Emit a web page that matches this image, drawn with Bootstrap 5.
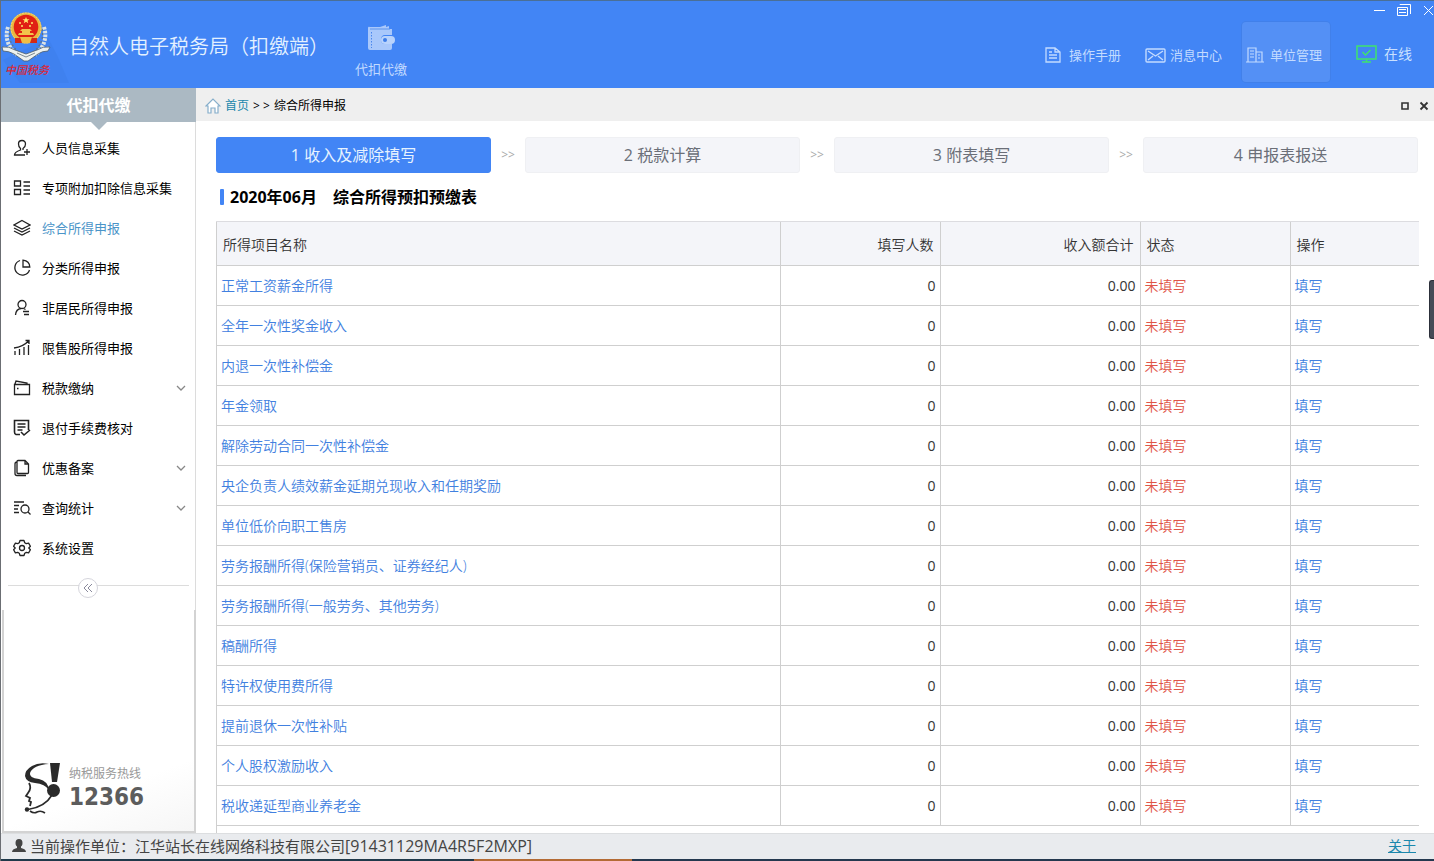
<!DOCTYPE html>
<html lang="zh-CN">
<head>
<meta charset="utf-8">
<meta name="viewport" content="width=device-width, initial-scale=1">
<title>自然人电子税务局（扣缴端）</title>
<link rel="stylesheet" href="https://cdn.jsdelivr.net/npm/bootstrap@5.3.0/dist/css/bootstrap.min.css">
<style>
  body { font-family: "Open Sans", "Noto Sans CJK SC", sans-serif; font-size: 13px; line-height: 20px; color: #000; background: #fff; }
  a { text-decoration: none; color: #4180e0; }
  svg { display: block; flex: none; }
  .window { border-left: 1px solid #6b6e73; border-top: 1px solid #4a6f96; }
  .plain { border: 0; background: none; padding: 0; }

  .app-header { height: 87px; background: #4285f5; color: #cfe1ff; }
  .emblem-box { width: 68px; }
  .app-title { font-size: 20px; line-height: 28px; font-weight: 350; color: #e4f1ff; margin-top: 4px; }
  .module-btn { padding: 24px 0 0; margin-left: 16px; width: 72px; color: #c3dbff; font-size: 13px; line-height: 20px; }
  .module-btn svg { margin: 0 auto 8px; }
  .tool-btn { height: 60px; padding: 6px 4px 0; color: #c3dbff; font-size: 13px; border: 0; border-radius: 4px; }
  .tool-btn.current { background: #5490f5; box-shadow: 0 0 0 1px #4180ea; width: 88px; gap: 6px; margin-right: 26px; }
  .tools { padding: 21px 22px 0 0; }
  .tool-btn.online { font-size: 14px; padding: 4px 0 0; color: #c9e0ff; gap: 7px; }
  .win-ctl { top: 2px; right: 0; gap: 12px; }
  .win-ctl button, .tab-ctl button { border: 0; background: none; padding: 0; }

  .sidebar { width: 195px; }
  .side-title { height: 34px; background: #abb9c3; color: #fff; font-size: 16px; font-weight: 700; line-height: 34px; }
  .side-title::after { content: ""; position: absolute; left: 50%; top: 100%; margin-left: -8px; border: 8px solid transparent; border-top-color: #abb9c3; border-bottom: 0; }
  .side-menu { padding-top: 6px; }
  .side-menu, .fold { border-right: 1px solid #dcdcdc; }
  .side-menu a { height: 40px; padding: 0 9px 0 12px; gap: 11px; color: #000; }
  .side-menu a.active { color: #4a94c8; }
  .side-menu svg { stroke: #222; fill: none; stroke-width: 1.3; }
  .side-menu .chev { stroke: #888; margin-left: auto; }
  .fold { height: 42px; padding: 11px 6px 0 7px; }
  .fold-line { border-top: 1px solid #dcdcdc; margin-top: 6px; }
  .fold button { left: 70px; top: -8px; width: 20px; height: 20px; border: 1px solid #d5d5dc; border-radius: 50%; background: #fff; }
  .hotline { border: 2px solid #d3d3d3; border-top: 0; margin-left: 1px; padding: 0 0 16px 20px; background: linear-gradient(160deg, #fff 75%, #f6f6f6); }
  .hot-label { font-size: 12px; line-height: 18px; color: #999; }
  .hot-num { font-size: 24px; line-height: 28px; font-weight: 700; color: #5c5c5c; font-family: "DejaVu Sans Condensed", "Open Sans", sans-serif; margin-bottom: 4px; }

  .crumbs { height: 33px; background: #efefef; font-size: 12px; padding: 2px 5px 0 9px; }
  .crumbs a { color: #1b87ac; }
  .crumbs .sep { width: 25px; }
  .work { padding: 16px 15px 0 20px; }
  .steps { padding-right: 1px; }
  .step { height: 36px; font-size: 16px; border: 1px solid #eff0f3; background: #f4f5f9; color: #6b6f78; border-radius: 3px; padding: 0; flex: 1 1 0; }
  .step.active { background: #4285f5; border-color: #4285f5; color: #e6f3ff; }
  .step-sep { width: 34px; color: #aaa; font-size: 12px; }
  .sheet-title { font-size: 16px; line-height: 24px; font-weight: 700; margin: 12px 0 12px 4px; gap: 6px; }
  .sheet-title::before { content: ""; width: 4px; height: 16px; background: #4285f5; border-radius: 1px; }
  .sheet-title .sheet-name { margin-left: 10px; }

  .income { table-layout: fixed; width: 100%; font-size: 14px; border-collapse: collapse; color: #333; }
  .income th, .income td { border: 1px solid #cfcfcf; border-right: 0; padding: 0 4px; height: 40px; }
  .income th { background: #f4f5f9; font-weight: 350; height: 44px; padding: 2px 6px 0; border-top-color: #dcdce0; }
  .income a, .income .todo { font-weight: 350; }
  .income .w-people { width: 160px; }
  .income .w-sum { width: 200px; }
  .income .w-state { width: 150px; }
  .income .w-op { width: 129px; }
  .todo { color: #df5548; }
  .tail { border-left: 1px solid #cfcfcf; }
  .drawer { right: 0; top: 279px; width: 5px; height: 59px; background: #454b57; border: 1px solid #2c303a; border-right: 0; border-radius: 3px 0 0 3px; }

  .status { height: 28px; background: linear-gradient(90deg, #20394a 0 33%, #b46b35 33% 44%, #24384f 44%) bottom / 100% 2px no-repeat #e9ebee; border-top: 1px solid #dcdee0; font-size: 15px; color: #444; padding: 0 18px 4px 11px; }
  .status .code { font-size: 16px; }
  .status a { font-size: 14px; color: #1b87ac; text-decoration: underline; }
</style>
</head>
<body>
<div class="window vh-100 d-flex flex-column overflow-hidden position-relative">
  <header class="app-header d-flex position-relative">
    <div class="emblem-box">
      <svg width="68" height="87" viewBox="1 1 68 87" role="img" aria-label="中国税务">
        <path d="M48 38L57 55 69 83H20L3 60z" fill="#3f81ef"/>
        <g fill="none" stroke="#dce3e4" stroke-width="4" stroke-dasharray="2.6 1.2">
          <path d="M8 27Q3 43 17 55M44 27Q49 43 35 55"/>
        </g>
        <g fill="none" stroke="#66757c" stroke-width="1.2" stroke-dasharray="2 2">
          <path d="M10 29Q7 43 20 53M42 29Q45 43 32 53"/>
        </g>
        <path d="M2 47Q9 46 15 50L26 54 37 50Q43 46 50 47L48 51Q42 51 38 54L28 61H24L14 54Q9 51 3 51z" fill="#edf1ef" stroke="#4c5d6b" stroke-width=".8"/>
        <path d="M17 53L26 57 35 53" fill="none" stroke="#7c8990"/>
        <circle cx="26" cy="28" r="15.5" fill="#e9b840"/>
        <circle cx="26" cy="28" r="15" fill="none" stroke="#f5d878" stroke-dasharray="2 1"/>
        <circle cx="26" cy="27" r="12.3" fill="#e02014"/>
        <path d="M26 17l1 2.3h2.5l-2 1.5.8 2.4-2.3-1.5-2.3 1.5.8-2.4-2-1.5H25z" fill="#ffe56a"/>
        <g fill="#ffe56a"><circle cx="20" cy="23" r="1"/><circle cx="22" cy="26" r="1"/><circle cx="30" cy="26" r="1"/><circle cx="32" cy="23" r="1"/></g>
        <path d="M18 35h16l-1-2h-3v-2h2l-2-2h-8l-2 2h2v2h-3z" fill="#f1c44c"/>
        <path d="M15 38h22v5H15z" fill="#d52a17"/><path d="M20 37h12l-2 6h-8z" fill="#f0bd45"/>
        <text x="5" y="74" font-size="11" font-style="italic" font-weight="500" fill="#d8283a">中国税务</text>
      </svg>
    </div>
    <div class="app-title align-self-center">自然人电子税务局（扣缴端）</div>
    <button type="button" class="plain module-btn text-center align-self-start">
      <svg width="28" height="26" viewBox="0 0 28 26"><path d="M1 3Q1 1 3 2l10 0 6-2v2l3-1v3h3v6h-7q-4 0-4 4.500t4 4.500h7v4q0 2-2 2H3q-2 0-2-2z" fill="#a9c8fb"/><path d="M3 4h20" stroke="#5b93ee"/><path d="M4.500 7v16" stroke="#4a87ec" stroke-dasharray="1.500 1.500"/><rect x="14" y="11" width="14" height="8" rx="4" fill="#b9d3fc"/><circle cx="18" cy="15" r="2" fill="#3d7de8"/></svg>
      代扣代缴
    </button>
    <nav class="tools d-flex ms-auto align-items-start" aria-label="工具">
      <button type="button" class="plain tool-btn d-flex align-items-center me-3 gap-2">
        <svg width="16" height="16" viewBox="0 0 16 16" fill="none" stroke="#c3dbff" stroke-width="1.300"><path d="M1 1h9l5 4v10H1zM10 1v4h5M4 5h3M4 8h8M4 11h8"/></svg>操作手册</button>
      <button type="button" class="plain tool-btn d-flex align-items-center me-3 gap-1">
        <svg width="21" height="15" viewBox="0 0 21 15" fill="none" stroke="#c3dbff" stroke-width="1.400"><rect x="1" y="1" width="19" height="13" rx="1"/><path d="M3 3l7.500 5L18 3M3 12l5-4M18 12l-5-4"/></svg>消息中心</button>
      <button type="button" class="tool-btn current d-flex align-items-center">
        <svg width="18" height="16" viewBox="0 0 18 16" fill="none" stroke="#c3dbff" stroke-width="1.200"><path d="M0 15h18M2 15V1h8v14M10 5h6v10M4 4h4M4 7h4M4 10h4M12 8h2M12 11h2"/></svg>单位管理</button>
      <div class="tool-btn online d-flex align-items-center">
        <svg width="21" height="18" viewBox="0 0 21 18" fill="none" stroke="#3fe36c" stroke-width="1.500"><path d="M1 1h19v13H1zM6 17h9M10.500 14v3M6.500 7l3 3 5-5"/></svg>在线</div>
    </nav>
    <div class="win-ctl position-absolute d-flex align-items-center">
      <button type="button" aria-label="最小化"><svg width="11" height="14" viewBox="0 0 11 14"><path d="M0 7.500h11" stroke="#fff"/></svg></button>
      <button type="button" aria-label="还原"><svg width="14" height="14" viewBox="0 0 14 14" fill="none" stroke="#fff"><path d="M.5 4.500h10v8H.5zM3 2V1.500h10.500V11M2 6.500h7M2 9.500h7" /></svg></button>
      <button type="button" aria-label="关闭"><svg width="11" height="14" viewBox="0 0 11 14"><path d="M1 3l9 9M10 3l-9 9" stroke="#fff"/></svg></button>
    </div>
  </header>

  <div class="d-flex flex-fill overflow-hidden">
    <aside class="sidebar d-flex flex-column flex-shrink-0">
      <div class="side-title text-center position-relative">代扣代缴</div>
      <nav class="side-menu nav flex-column">
        <a href="#" class="d-flex align-items-center"><svg width="18" height="18" viewBox="0 0 18 18"><path d="M10 11V9.500Q12.500 8 12.500 5 12.500 1.500 9 1.500T5.500 5Q5.500 8 7.500 9.500V11Q1.500 13 1.500 16H12M14 10v6M11 13h6"/></svg>人员信息采集</a>
        <a href="#" class="d-flex align-items-center"><svg width="18" height="18" viewBox="0 0 18 18"><path d="M1.500 2h6v5h-6zM1.500 10.500h6v5h-6zM10.500 3H17M10.500 7H17M10.500 11H17M10.500 15H17"/></svg>专项附加扣除信息采集</a>
        <a href="#" class="d-flex align-items-center active"><svg width="18" height="18" viewBox="0 0 18 18"><path d="M9 1.500L17 6 9 10 1 6zM1 9l8 4 8-4M1 12l8 4 8-4"/></svg>综合所得申报</a>
        <a href="#" class="d-flex align-items-center"><svg width="18" height="18" viewBox="0 0 18 18"><path d="M7 1.500A7.500 7.500 0 1 0 16.500 11M10 1.200V8h6.800Q16.500 2 10 1.200z"/></svg>分类所得申报</a>
        <a href="#" class="d-flex align-items-center"><svg width="18" height="18" viewBox="0 0 18 18"><circle cx="9" cy="5.500" r="4"/><path d="M2.500 16Q3 10 8 9.500M10.500 9.500l2 1M10 12.500h6M11 15.500h5"/></svg>非居民所得申报</a>
        <a href="#" class="d-flex align-items-center"><svg width="18" height="18" viewBox="0 0 18 18"><path d="M2 12v4M6.500 10v6M11 8v8M15.500 6v10M1 9Q10 8 16 1.500M12.500 1.500H16V5"/></svg>限售股所得申报</a>
        <a href="#" class="d-flex align-items-center"><svg width="18" height="18" viewBox="0 0 18 18"><path d="M1.500 5.500h15v10h-15zM2 5l1-3 11 2v1M4 9.500h1.500"/></svg>税款缴纳<svg class="chev" width="10" height="8" viewBox="0 0 10 8"><path d="M1 2l4 4 4-4"/></svg></a>
        <a href="#" class="d-flex align-items-center"><svg width="18" height="18" viewBox="0 0 18 18"><path stroke-width="1.600" d="M7 15.500H3Q1.500 15 1.500 13V1.500h14V11M4.500 5h8M4.500 8h8M4.500 11h5M8 13l3 3 6-5"/></svg>退付手续费核对</a>
        <a href="#" class="d-flex align-items-center"><svg width="18" height="18" viewBox="0 0 18 18"><path d="M5 1.500h7L15.500 5v8.500q0 1-1 1H5q-1 0-1-1v-11q0-1 1-1zM12 1.500V5h3.500M4 3Q2 3 2 5v9.500q0 2 2 2h9"/></svg>优惠备案<svg class="chev" width="10" height="8" viewBox="0 0 10 8"><path d="M1 2l4 4 4-4"/></svg></a>
        <a href="#" class="d-flex align-items-center"><svg width="18" height="18" viewBox="0 0 18 18"><path d="M1 3h10M1 6.500h5M1 10h4M1 13.500h5"/><circle cx="12" cy="10" r="4"/><path d="M15 13l2.500 2.500"/></svg>查询统计<svg class="chev" width="10" height="8" viewBox="0 0 10 8"><path d="M1 2l4 4 4-4"/></svg></a>
        <a href="#" class="d-flex align-items-center"><svg width="18" height="18" viewBox="0 0 18 18"><circle cx="9" cy="9" r="2.500"/><path stroke-linejoin="round" d="M7 1.500h4l.7 2.200 1.600.9 2.300-.5 1.800 3.200L15.800 9l1.600 1.700-1.800 3.200-2.300-.5-1.600.9-.7 2.200H7l-.7-2.200-1.600-.9-2.300.5L.6 10.700 2.200 9 .6 7.300l1.800-3.200 2.300.5 1.600-.9z"/></svg>系统设置</a>
      </nav>
      <div class="fold">
        <div class="fold-line position-relative">
          <button type="button" class="position-absolute d-flex align-items-center justify-content-center p-0" aria-label="收起菜单"><svg width="10" height="8" viewBox="0 0 10 8" fill="none" stroke="#8a8a9c"><path d="M5 0L1 4l4 4M9 0L5 4l4 4"/></svg></button>
        </div>
      </div>
      <div class="hotline flex-fill d-flex align-items-end">
        <svg width="45" height="54" viewBox="23 761 45 54" fill="#2a2a2a"><path d="M48 764Q38 762 31 766 24 770 24 776 25 782 34 783 44 784 48 790 47 781 38 779 28 778 29 773 32 765 48 764z"/><path d="M49 763h10l-3 19h-5z"/><circle cx="52.500" cy="790.500" r="6.500"/><path d="M28 783q3 5-1 10l-2 3 4 2-1 3 2 1-1 4" fill="none" stroke="#2a2a2a" stroke-width="1.800"/><path d="M51 795Q44 807 27 809.500" fill="none" stroke="#2a2a2a" stroke-width="1.600"/><path d="M29 811q4 3 7 1 4-2 8 1" fill="none" stroke="#2a2a2a" stroke-width="1.600"/><circle cx="26" cy="809.500" r="2.200"/></svg>
        <div><div class="hot-label">纳税服务热线</div><div class="hot-num">12366</div></div>
      </div>
    </aside>

    <main class="flex-fill d-flex flex-column overflow-hidden">
      <div class="crumbs d-flex align-items-center">
        <svg class="me-1" width="16" height="16" viewBox="0 0 16 16" fill="#fff" stroke="#86aecb" stroke-width="1.200"><path d="M1 8l7-7 7 7h-2v7H10v-5H6v5H3V8z"/></svg>
        <a href="#">首页</a><span class="sep text-center">&gt; &gt;</span><span>综合所得申报</span>
        <div class="tab-ctl ms-auto d-flex gap-2">
          <button type="button" aria-label="最大化"><svg width="12" height="10" viewBox="0 0 12 10"><path d="M3 2h6v6H3z" fill="none" stroke="#333" stroke-width="1.600"/></svg></button>
          <button type="button" aria-label="关闭标签"><svg width="10" height="10" viewBox="0 0 10 10"><path d="M1.500 1.500l7 7M8.500 1.500l-7 7" stroke="#333" stroke-width="1.800"/></svg></button>
        </div>
      </div>
      <div class="work flex-fill d-flex flex-column">
        <div class="steps d-flex align-items-center">
          <button type="button" class="step active">1 收入及减除填写</button><span class="step-sep text-center">&gt;&gt;</span>
          <button type="button" class="step">2 税款计算</button><span class="step-sep text-center">&gt;&gt;</span>
          <button type="button" class="step">3 附表填写</button><span class="step-sep text-center">&gt;&gt;</span>
          <button type="button" class="step">4 申报表报送</button>
        </div>
        <h1 class="sheet-title d-flex align-items-center"><span>2020年06月</span><span class="sheet-name">综合所得预扣预缴表</span></h1>
        <table class="income">
          <thead><tr><th>所得项目名称</th><th class="w-people text-end">填写人数</th><th class="w-sum text-end">收入额合计</th><th class="w-state">状态</th><th class="w-op">操作</th></tr></thead>
          <tbody>
            <tr><td><a href="#">正常工资薪金所得</a></td><td class="text-end">0</td><td class="text-end">0.00</td><td class="todo">未填写</td><td><a href="#">填写</a></td></tr>
            <tr><td><a href="#">全年一次性奖金收入</a></td><td class="text-end">0</td><td class="text-end">0.00</td><td class="todo">未填写</td><td><a href="#">填写</a></td></tr>
            <tr><td><a href="#">内退一次性补偿金</a></td><td class="text-end">0</td><td class="text-end">0.00</td><td class="todo">未填写</td><td><a href="#">填写</a></td></tr>
            <tr><td><a href="#">年金领取</a></td><td class="text-end">0</td><td class="text-end">0.00</td><td class="todo">未填写</td><td><a href="#">填写</a></td></tr>
            <tr><td><a href="#">解除劳动合同一次性补偿金</a></td><td class="text-end">0</td><td class="text-end">0.00</td><td class="todo">未填写</td><td><a href="#">填写</a></td></tr>
            <tr><td><a href="#">央企负责人绩效薪金延期兑现收入和任期奖励</a></td><td class="text-end">0</td><td class="text-end">0.00</td><td class="todo">未填写</td><td><a href="#">填写</a></td></tr>
            <tr><td><a href="#">单位低价向职工售房</a></td><td class="text-end">0</td><td class="text-end">0.00</td><td class="todo">未填写</td><td><a href="#">填写</a></td></tr>
            <tr><td><a href="#">劳务报酬所得(保险营销员、证券经纪人)</a></td><td class="text-end">0</td><td class="text-end">0.00</td><td class="todo">未填写</td><td><a href="#">填写</a></td></tr>
            <tr><td><a href="#">劳务报酬所得(一般劳务、其他劳务)</a></td><td class="text-end">0</td><td class="text-end">0.00</td><td class="todo">未填写</td><td><a href="#">填写</a></td></tr>
            <tr><td><a href="#">稿酬所得</a></td><td class="text-end">0</td><td class="text-end">0.00</td><td class="todo">未填写</td><td><a href="#">填写</a></td></tr>
            <tr><td><a href="#">特许权使用费所得</a></td><td class="text-end">0</td><td class="text-end">0.00</td><td class="todo">未填写</td><td><a href="#">填写</a></td></tr>
            <tr><td><a href="#">提前退休一次性补贴</a></td><td class="text-end">0</td><td class="text-end">0.00</td><td class="todo">未填写</td><td><a href="#">填写</a></td></tr>
            <tr><td><a href="#">个人股权激励收入</a></td><td class="text-end">0</td><td class="text-end">0.00</td><td class="todo">未填写</td><td><a href="#">填写</a></td></tr>
            <tr><td><a href="#">税收递延型商业养老金</a></td><td class="text-end">0</td><td class="text-end">0.00</td><td class="todo">未填写</td><td><a href="#">填写</a></td></tr>
          </tbody>
        </table>
        <div class="tail flex-fill"></div>
      </div>
    </main>
  </div>
  <div class="drawer position-absolute"></div>

  <footer class="status d-flex align-items-center">
    <svg class="me-1" width="14" height="14" viewBox="0 0 14 14" fill="#444"><ellipse cx="7" cy="4" rx="3.500" ry="4"/><path d="M5 7h4v2q5 1 5 4H0q0-3 5-4z"/></svg>
    <span>当前操作单位：江华站长在线网络科技有限公司<span class="code">[91431129MA4R5F2MXP]</span></span>
    <a href="#" class="ms-auto">关于</a>
  </footer>
</div>
<script src="https://cdn.jsdelivr.net/npm/bootstrap@5.3.0/dist/js/bootstrap.bundle.min.js"></script>
</body>
</html>
